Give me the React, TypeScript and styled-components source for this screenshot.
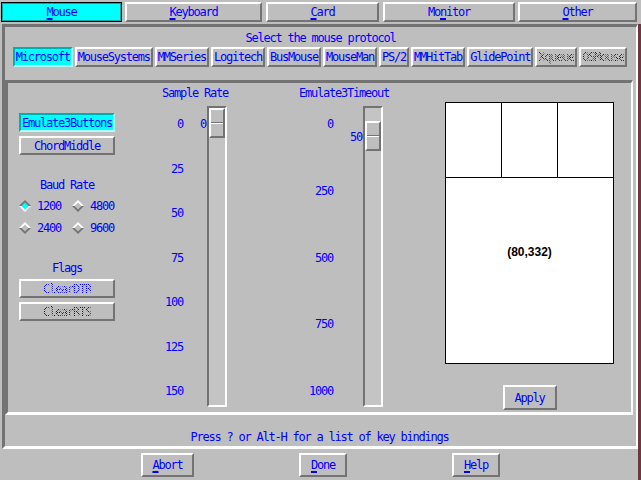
import React from 'react';
import styled, { createGlobalStyle, css } from 'styled-components';

const DARK = '#737373';
const LIGHT = '#ffffff';
const BLUE = '#0000ff';

const GlobalStyle = createGlobalStyle`
  * { box-sizing: border-box; }
  html, body {
    margin: 0;
    padding: 0;
    background: #bebebe;
  }
  body {
    width: 641px;
    height: 480px;
    overflow: hidden;
    font-family: "DejaVu Sans Mono", "Liberation Mono", monospace;
    font-size: 12px;
    letter-spacing: -1.22px;
    color: ${BLUE};
  }
`;

const bevel = css<{ $on?: boolean }>`
  border: 2px solid;
  border-color: ${(p) =>
    p.$on ? '#00b0b0 #b4ffff #b4ffff #00b0b0' : `${LIGHT} ${DARK} ${DARK} ${LIGHT}`};
  background: ${(p) => (p.$on ? '#00ffff' : '#bebebe')};
`;

const Page = styled.div`
  width: 641px;
  height: 480px;
  display: flex;
  flex-direction: column;
`;

const TabBar = styled.div`
  display: flex;
  height: 24px;
  padding: 2px 0 0 1px;
`;

const Tab = styled.div<{ $w: number; $gap: number; $active?: boolean }>`
  width: ${(p) => p.$w}px;
  margin-right: ${(p) => p.$gap}px;
  height: 20px;
  display: flex;
  align-items: center;
  justify-content: center;
  border: 2px solid;
  border-color: ${LIGHT} ${DARK} ${DARK} ${LIGHT};
  ${(p) =>
    p.$active &&
    css`
      background: #00ffff;
      border: 1px solid #000;
      box-shadow: inset 1px 1px 0 #00a8a8, inset -1px -1px 0 #00a8a8;
    `}
`;

const Key = styled.span`
  text-decoration: underline;
  text-decoration-thickness: 2px;
  text-underline-offset: 2px;
`;

const Body = styled.div`
  flex: 1;
  display: flex;
  flex-direction: column;
  border-right: 3px solid #6e3640;
`;

const Frame = styled.div`
  margin-left: 2px;
  width: 636px;
  height: 425px;
  border-style: solid;
  border-width: 3px 2px 3px 3px;
  border-color: ${DARK} ${LIGHT} ${LIGHT} ${DARK};
  display: flex;
  flex-direction: column;
`;

const ProtocolSection = styled.div`
  height: 53px;
  padding-top: 5px;
  display: flex;
  flex-direction: column;
  align-items: center;
`;

const Caption = styled.div`
  height: 12px;
  line-height: 12px;
  white-space: nowrap;
`;

const ProtocolRow = styled.div`
  margin-top: 3px;
  display: flex;
  gap: 2px;
  padding-right: 1px;
`;

const ProtoButton = styled.div<{ $on?: boolean }>`
  ${bevel};
  height: 20px;
  padding: 0 1px;
  display: flex;
  align-items: center;
  white-space: nowrap;
`;

const Stipple = styled.span`
  color: transparent;
  background-image: repeating-conic-gradient(${BLUE} 0 25%, transparent 0 50%);
  background-size: 2px 2px;
  -webkit-background-clip: text;
  background-clip: text;
`;

const Panel = styled.div`
  height: 335px;
  margin-right: 3px;
  border-style: solid;
  border-width: 3px 2px 3px 3px;
  border-color: ${DARK} ${LIGHT} ${LIGHT} ${DARK};
  display: flex;
  align-items: flex-start;
`;

const LeftCol = styled.div`
  margin: 30px 0 0 11px;
  width: 96px;
  display: flex;
  flex-direction: column;
`;

const Toggle = styled.div<{ $on?: boolean; $top: number }>`
  ${bevel};
  margin-top: ${(p) => p.$top}px;
  height: 19px;
  display: flex;
  align-items: center;
  justify-content: center;
  white-space: nowrap;
`;

const GroupLabel = styled.div<{ $top: number }>`
  margin-top: ${(p) => p.$top}px;
  height: 12px;
  line-height: 12px;
  text-align: center;
`;

const RadioGrid = styled.div`
  margin-top: 9px;
  display: grid;
  grid-template-columns: 53px 43px;
  row-gap: 10px;
`;

const Radio = styled.div`
  display: flex;
  align-items: center;
  gap: 6px;
  height: 12px;
  line-height: 12px;
`;

const ScaleBlock = styled.div<{ $left: number; $w: number }>`
  margin: 4px 0 0 ${(p) => p.$left}px;
  width: ${(p) => p.$w}px;
  display: flex;
  flex-direction: column;
`;

const ScaleBody = styled.div`
  margin-top: 7px;
  display: flex;
`;

const Ticks = styled.div<{ $w: number }>`
  width: ${(p) => p.$w}px;
  height: 301px;
  padding: 13px 0 11px;
  display: flex;
  flex-direction: column;
  justify-content: space-between;
  align-items: flex-end;
  line-height: 10px;
  white-space: nowrap;
`;

const Track = styled.div<{ $gap: number }>`
  position: relative;
  margin-left: ${(p) => p.$gap}px;
  width: 20px;
  height: 301px;
  border: 2px solid;
  border-color: ${DARK} ${LIGHT} ${LIGHT} ${DARK};
  background: #c4c4c4;
`;

const Thumb = styled.div`
  position: absolute;
  left: 0;
  right: 0;
  height: 30px;
  background: #bebebe;
  border: 2px solid;
  border-color: ${LIGHT} ${DARK} ${DARK} ${LIGHT};

  &::after {
    content: '';
    position: absolute;
    left: 0;
    right: 0;
    top: 12px;
    height: 1px;
    background: ${DARK};
    border-bottom: 1px solid ${LIGHT};
    box-sizing: content-box;
  }
`;

const ValueLabel = styled.div`
  position: absolute;
  right: calc(100% + 3px);
  line-height: 10px;
  white-space: nowrap;
`;

const MouseCol = styled.div`
  margin: 19px 0 0 56px;
  display: flex;
  flex-direction: column;
  align-items: center;
`;

const MouseBox = styled.div`
  width: 169px;
  height: 262px;
  border: 1px solid #000;
  background: #fff;
  display: flex;
  flex-direction: column;
`;

const MouseButtons = styled.div`
  height: 75px;
  display: grid;
  grid-template-columns: 56px 56px 1fr;
  border-bottom: 1px solid #000;
`;

const MouseKey = styled.div`
  border-right: 1px solid #000;
  &:last-child { border-right: none; }
`;

const Coords = styled.div`
  padding-top: 67px;
  text-align: center;
  font-family: "Liberation Sans", Arial, sans-serif;
  font-weight: bold;
  font-size: 12px;
  letter-spacing: 0;
  line-height: 14px;
  color: #000;
`;

const PushButton = styled.div<{ $w: number; $h: number }>`
  ${bevel};
  width: ${(p) => p.$w}px;
  height: ${(p) => p.$h}px;
  display: flex;
  align-items: center;
  justify-content: center;
`;

const ApplyWrap = styled.div`
  margin-top: 21px;
`;

const HelpLine = styled.div`
  flex: 1;
  display: flex;
  align-items: flex-end;
  justify-content: center;
  padding: 0 2px 3px 0;
  line-height: 12px;
`;

const BottomBar = styled.div`
  display: flex;
  padding: 4px 0 0 141px;
  gap: 105px;
`;

function Diamond({ on }: { on?: boolean }) {
  return (
    <svg width="12" height="12" viewBox="0 0 12 12">
      <polygon points="0,6 6,0 12,6" fill={on ? DARK : LIGHT} />
      <polygon points="0,6 6,12 12,6" fill={on ? LIGHT : DARK} />
      <polygon points="6,2.5 9.5,6 6,9.5 2.5,6" fill={on ? '#00ffff' : '#bebebe'} />
    </svg>
  );
}

interface ScaleProps {
  title: string;
  ticks: string[];
  value: number;
  max: number;
  left: number;
  width: number;
  tickWidth: number;
  gap: number;
}

function Scale({ title, ticks, value, max, left, width, tickWidth, gap }: ScaleProps) {
  const top = Math.round((value / max) * (297 - 30));
  return (
    <ScaleBlock $left={left} $w={width}>
      <Caption>{title}</Caption>
      <ScaleBody>
        <Ticks $w={tickWidth}>
          {ticks.map((t) => (
            <span key={t}>{t}</span>
          ))}
        </Ticks>
        <Track $gap={gap}>
          <Thumb style={{ top }} />
          <ValueLabel style={{ top: top + 11 }}>{value}</ValueLabel>
        </Track>
      </ScaleBody>
    </ScaleBlock>
  );
}

const protocols = [
  'Microsoft',
  'MouseSystems',
  'MMSeries',
  'Logitech',
  'BusMouse',
  'MouseMan',
  'PS/2',
  'MMHitTab',
  'GlidePoint',
];

export default function App() {
  return (
    <Page>
      <GlobalStyle />
      <TabBar>
        <Tab $w={121} $gap={3} $active>
          <span><Key>M</Key>ouse</span>
        </Tab>
        <Tab $w={137} $gap={4}>
          <span><Key>K</Key>eyboard</span>
        </Tab>
        <Tab $w={113} $gap={4}>
          <span><Key>C</Key>ard</span>
        </Tab>
        <Tab $w={132} $gap={3}>
          <span>Mo<Key>n</Key>itor</span>
        </Tab>
        <Tab $w={119} $gap={0}>
          <span><Key>O</Key>ther</span>
        </Tab>
      </TabBar>

      <Body>
        <Frame>
          <ProtocolSection>
            <Caption>Select the mouse protocol</Caption>
            <ProtocolRow>
              {protocols.map((p, i) => (
                <ProtoButton key={p} $on={i === 0}>{p}</ProtoButton>
              ))}
              <ProtoButton><Stipple>Xqueue</Stipple></ProtoButton>
              <ProtoButton><Stipple>OSMouse</Stipple></ProtoButton>
            </ProtocolRow>
          </ProtocolSection>

          <Panel>
            <LeftCol>
              <Toggle $on $top={0}>Emulate3Buttons</Toggle>
              <Toggle $top={4}>ChordMiddle</Toggle>
              <GroupLabel $top={24}>Baud Rate</GroupLabel>
              <RadioGrid>
                <Radio><Diamond on />1200</Radio>
                <Radio><Diamond />4800</Radio>
                <Radio><Diamond />2400</Radio>
                <Radio><Diamond />9600</Radio>
              </RadioGrid>
              <GroupLabel $top={28}>Flags</GroupLabel>
              <Toggle $top={5}><Stipple>ClearDTR</Stipple></Toggle>
              <Toggle $top={4}><Stipple>ClearRTS</Stipple></Toggle>
            </LeftCol>

            <Scale
              title="Sample Rate"
              ticks={['0', '25', '50', '75', '100', '125', '150']}
              value={0}
              max={150}
              left={47}
              width={66}
              tickWidth={21}
              gap={24}
            />
            <Scale
              title="Emulate3Timeout"
              ticks={['0', '250', '500', '750', '1000']}
              value={50}
              max={1000}
              left={71}
              width={90}
              tickWidth={34}
              gap={30}
            />

            <MouseCol>
              <MouseBox>
                <MouseButtons>
                  <MouseKey />
                  <MouseKey />
                  <MouseKey />
                </MouseButtons>
                <Coords>(80,332)</Coords>
              </MouseBox>
              <ApplyWrap>
                <PushButton $w={54} $h={25}>Apply</PushButton>
              </ApplyWrap>
            </MouseCol>
          </Panel>

          <HelpLine>Press ? or Alt-H for a list of key bindings</HelpLine>
        </Frame>

        <BottomBar>
          <PushButton $w={53} $h={24}><span><Key>A</Key>bort</span></PushButton>
          <PushButton $w={48} $h={24}><span><Key>D</Key>one</span></PushButton>
          <PushButton $w={48} $h={24}><span><Key>H</Key>elp</span></PushButton>
        </BottomBar>
      </Body>
    </Page>
  );
}
